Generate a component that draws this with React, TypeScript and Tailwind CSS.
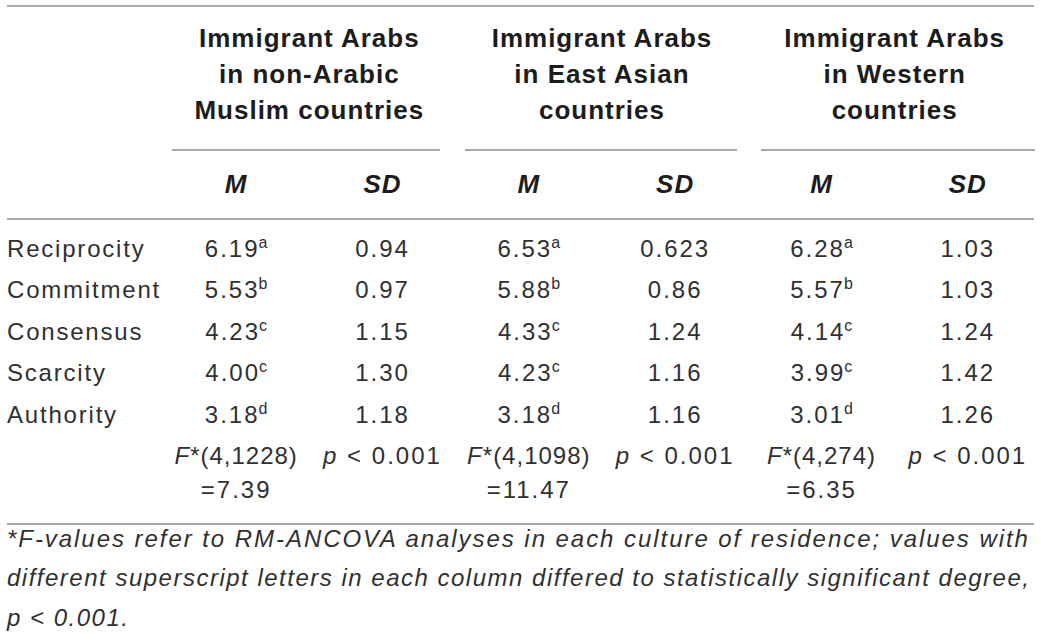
type Cell = string | [string, string];

const rows: Cell[][] = [
  ["Reciprocity", ["6.19", "a"], "0.94", ["6.53", "a"], "0.623", ["6.28", "a"], "1.03"],
  ["Commitment", ["5.53", "b"], "0.97", ["5.88", "b"], "0.86", ["5.57", "b"], "1.03"],
  ["Consensus", ["4.23", "c"], "1.15", ["4.33", "c"], "1.24", ["4.14", "c"], "1.24"],
  ["Scarcity", ["4.00", "c"], "1.30", ["4.23", "c"], "1.16", ["3.99", "c"], "1.42"],
  ["Authority", ["3.18", "d"], "1.18", ["3.18", "d"], "1.16", ["3.01", "d"], "1.26"],
];

const groups = [
  { lines: ["Immigrant Arabs", "in non-Arabic", "Muslim countries"], rule: "ml-[9px] mr-[16px]", f: "(4,1228)", v: "=7.39" },
  { lines: ["Immigrant Arabs", "in East Asian", "countries"], rule: "ml-[9px] mr-[11px]", f: "(4,1098)", v: "=11.47" },
  { lines: ["Immigrant Arabs", "in Western", "countries"], rule: "ml-[13px] mr-[6px]", f: "(4,274)", v: "=6.35" },
];

const Rule = ({ className = "" }: { className?: string }) => (
  <div className={`h-[2px] bg-[#a9a9a9] ${className}`} />
);

const Value = ({ cell }: { cell: Cell }) => {
  if (typeof cell === "string") return <span>{cell}</span>;
  return (
    <span>
      {cell[0]}
      <sup className="text-[16px] -top-[9px] -ml-[1px] tracking-normal">{cell[1]}</sup>
    </span>
  );
};

const App = () => {
  return (
    <div
      className="w-[1041px] h-[642px] bg-white pt-[5px] overflow-hidden"
      style={{ fontFamily: '"Liberation Sans", Arial, sans-serif' }}
    >
      <Rule className="mx-[7px]" />

      <div className="grid grid-cols-[163px_repeat(6,1fr)] text-[#1c1c1c] font-bold text-[26px] tracking-[1px]">
        <div />
        {groups.map((g) => (
          <div key={g.f} className="col-span-2 flex flex-col">
            <div className="text-center leading-[36px] pt-[13px] pb-[21px]">
              {g.lines.map((l) => (
                <div key={l}>{l}</div>
              ))}
            </div>
            <Rule className={g.rule} />
          </div>
        ))}
        <div />
        {groups.map((g) => (
          <div key={g.v} className="col-span-2 grid grid-cols-2 italic h-[67px] items-center text-center">
            <div>M</div>
            <div>SD</div>
          </div>
        ))}
      </div>

      <Rule className="mx-[7px]" />

      <div className="grid grid-cols-[163px_repeat(6,1fr)] pt-[8px] text-[24px] tracking-[2px] text-[#303030]">
        {rows.map((r) =>
          r.map((c, i) => (
            <div
              key={`${r[0]}-${i}`}
              className={`h-[41.5px] flex items-center whitespace-nowrap ${i === 0 ? "pl-[7px] tracking-[1.8px]" : "justify-center"}`}
            >
              <Value cell={c} />
            </div>
          ))
        )}
        <div />
        {groups.map((g) => (
          <div key={g.f} className="col-span-2 grid grid-cols-2 text-center whitespace-nowrap">
            <div className="flex flex-col items-center">
              <div className="h-[41.5px] flex items-center tracking-[1px]">
                <span>
                  <span className="italic">F</span>*{g.f}
                </span>
              </div>
              <div className="h-[26px] flex items-center">{g.v}</div>
            </div>
            <div className="h-[41.5px] flex items-center justify-center">
              <span>
                <span className="italic">p</span> &lt; 0.001
              </span>
            </div>
          </div>
        ))}
      </div>

      <Rule className="mx-[7px] mt-[20px]" />

      <div className="px-[7px] italic text-[24px] text-[#303030] whitespace-nowrap">
        <div className="leading-[28px] tracking-[1.95px]">
          *F-values refer to RM-ANCOVA analyses in each culture of residence; values with
        </div>
        <div className="mt-[5px] leading-[40px] tracking-[1.5px]">
          different superscript letters in each column differed to statistically significant degree,
        </div>
        <div className="leading-[40px] tracking-[1.5px]">p &lt; 0.001.</div>
      </div>
    </div>
  );
};

export default App;
